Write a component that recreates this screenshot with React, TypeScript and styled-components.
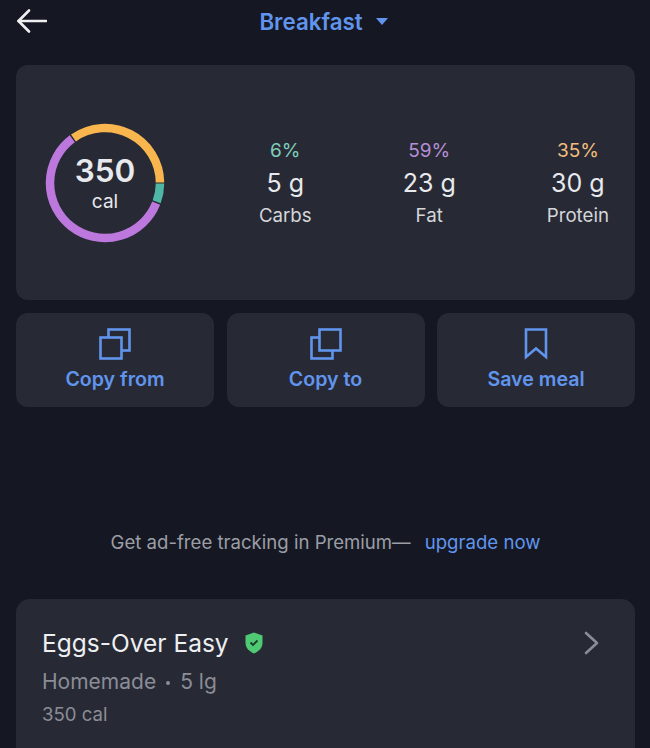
import { createGlobalStyle, styled } from 'styled-components'

const GlobalStyle = createGlobalStyle`
    html, body {
        margin: 0;
        padding: 0;
        height: 100%;
        background: #151823;
        overflow: hidden;
    }

    body {
        font-family: Inter, "Liberation Sans", sans-serif;
        -webkit-font-smoothing: antialiased;
    }
`

const Screen = styled.div`
    width: 650px;
    height: 748px;
    overflow: hidden;
    padding: 0 15px 0 16px;
    box-sizing: border-box;
    display: flex;
    flex-direction: column;
    background: #151823;
`

const Header = styled.header`
    height: 42px;
    margin-bottom: 23px;
    flex-shrink: 0;
    display: grid;
    grid-template-columns: 1fr auto 1fr;
    align-items: center;
`

const BackButton = styled.div`
    display: flex;
    align-items: center;
    padding-left: 1px;
`

const MealPicker = styled.div`
    display: flex;
    align-items: center;
    gap: 13px;
    margin-left: -4px;
    color: #6195ed;
    font-size: 22.3px;
    font-weight: 600;
`

const Caret = styled.span`
    width: 0;
    height: 0;
    border-left: 6.5px solid transparent;
    border-right: 6.5px solid transparent;
    border-top: 7px solid #6195ed;
`

const SummaryCard = styled.section`
    height: 235px;
    flex-shrink: 0;
    box-sizing: border-box;
    padding: 0 26px 0 29px;
    border-radius: 12px;
    background: #272a35;
    display: flex;
    align-items: center;
    justify-content: space-between;
`

const Ring = styled.div`
    position: relative;
    width: 120px;
    height: 120px;
`

const RingLabel = styled.div`
    position: absolute;
    inset: 0;
    display: flex;
    flex-direction: column;
    align-items: center;
    justify-content: center;
    color: #e8e9ec;
`

const Calories = styled.div`
    font-size: 31.5px;
    font-weight: 600;
    line-height: 38px;
`

const CaloriesUnit = styled.div`
    font-size: 19px;
    line-height: 24px;
`

const Macros = styled.div`
    display: flex;
    gap: 91px;
    padding-top: 2px;
`

const Macro = styled.div`
    display: flex;
    flex-direction: column;
    align-items: center;
`

const Percent = styled.div<{ $color: string }>`
    color: ${ props => props.$color };
    font-size: 19px;
    line-height: 22px;
`

const Grams = styled.div`
    color: #e8e9ec;
    font-size: 25px;
    line-height: 30px;
    margin-top: 6px;
`

const MacroName = styled.div`
    color: #d5d6da;
    font-size: 18.7px;
    line-height: 22px;
    margin-top: 7px;
`

const Actions = styled.div`
    display: grid;
    grid-template-columns: repeat(3, 198px);
    column-gap: 12.5px;
    margin-top: 13px;
    flex-shrink: 0;
`

const ActionButton = styled.div`
    height: 94px;
    box-sizing: border-box;
    padding-top: 15px;
    border-radius: 12px;
    background: #272a35;
    display: flex;
    flex-direction: column;
    align-items: center;
    gap: 8px;
    color: #6195ed;
    font-size: 19.6px;
    font-weight: 600;
    line-height: 22px;
`

const Promo = styled.div`
    margin-top: 123px;
    height: 24px;
    flex-shrink: 0;
    display: flex;
    justify-content: center;
    align-items: center;
    gap: 14px;
    font-size: 18.6px;
    color: #9c9ea6;
`

const UpgradeLink = styled.span`
    color: #6195ed;
`

const FoodCard = styled.section`
    margin-top: 45px;
    height: 170px;
    flex-shrink: 0;
    box-sizing: border-box;
    padding: 26px 36px 0 26px;
    border-radius: 14px;
    background: #272a35;
    display: flex;
    justify-content: space-between;
`

const FoodInfo = styled.div`
    display: flex;
    flex-direction: column;
`

const FoodTitle = styled.div`
    display: flex;
    align-items: center;
    gap: 16px;
    color: #eeeff1;
    font-size: 24.5px;
    line-height: 36px;
`

const FoodServing = styled.div`
    color: #8b8d96;
    font-size: 21px;
    line-height: 26px;
    margin-top: 8px;
`

const ServingDot = styled.span`
    display: inline-block;
    width: 4px;
    height: 4px;
    margin: 0 10px;
    border-radius: 50%;
    background: #8b8d96;
    vertical-align: middle;
`

const FoodCalories = styled.div`
    color: #8b8d96;
    font-size: 18.6px;
    line-height: 22px;
    margin-top: 8px;
`

const Chevron = styled.svg`
    margin-top: 6px;
`

const polar = (angle: number) => {
    const radians = (angle - 90) * Math.PI / 180
    return `${ 60 + 55 * Math.cos(radians) } ${ 60 + 55 * Math.sin(radians) }`
}

const arc = (start: number, end: number) =>
    `M ${ polar(start) } A 55 55 0 ${ end - start > 180 ? 1 : 0 } 1 ${ polar(end) }`

const segments = [
    { color: '#f9b64f', start: -35, end: 89.5 },
    { color: '#4fb7a6', start: 90.5, end: 110 },
    { color: '#bd78dd', start: 111.5, end: 323.5 },
]

const macros = [
    { name: 'Carbs', percent: '6%', grams: '5 g', color: '#7fcdbb' },
    { name: 'Fat', percent: '59%', grams: '23 g', color: '#b58fd6' },
    { name: 'Protein', percent: '35%', grams: '30 g', color: '#f2bd7c' },
]

const CopyFromIcon = () => (
    <svg width="32" height="32" viewBox="0 0 32 32" fill="none" stroke="#6195ed" strokeWidth="2.6">
        <rect x="9.5" y="1.5" width="21" height="21" />
        <rect x="1.5" y="9.5" width="21" height="21" fill="#272a35" />
    </svg>
)

const CopyToIcon = () => (
    <svg width="32" height="32" viewBox="0 0 32 32" fill="none" stroke="#6195ed" strokeWidth="2.6">
        <rect x="1.5" y="9.5" width="21" height="21" />
        <rect x="9.5" y="1.5" width="21" height="21" fill="#272a35" />
    </svg>
)

const BookmarkIcon = () => (
    <svg width="26" height="32" viewBox="0 0 26 32" fill="none" stroke="#6195ed" strokeWidth="2.6">
        <path d="M3 1.5 H23 V29 L13 20.5 L3 29 Z" />
    </svg>
)

const App = () => {

    return (
        <Screen>
            <GlobalStyle />

            <Header>
                <BackButton>
                    <svg width="30" height="24" viewBox="0 0 30 24" fill="none" stroke="#eeeff1" strokeWidth="2.6" strokeLinecap="round" strokeLinejoin="round">
                        <path d="M1.5 12 H29" />
                        <path d="M12 1.5 L1.5 12 L12 22.5" />
                    </svg>
                </BackButton>
                <MealPicker>
                    Breakfast
                    <Caret />
                </MealPicker>
            </Header>

            <SummaryCard>
                <Ring>
                    <svg width="120" height="120" viewBox="0 0 120 120" fill="none" strokeWidth="8.5">
                        { segments.map(segment => (
                            <path key={ segment.color } d={ arc(segment.start, segment.end) } stroke={ segment.color } />
                        )) }
                    </svg>
                    <RingLabel>
                        <Calories>350</Calories>
                        <CaloriesUnit>cal</CaloriesUnit>
                    </RingLabel>
                </Ring>

                <Macros>
                    { macros.map(macro => (
                        <Macro key={ macro.name }>
                            <Percent $color={ macro.color }>{ macro.percent }</Percent>
                            <Grams>{ macro.grams }</Grams>
                            <MacroName>{ macro.name }</MacroName>
                        </Macro>
                    )) }
                </Macros>
            </SummaryCard>

            <Actions>
                <ActionButton>
                    <CopyFromIcon />
                    Copy from
                </ActionButton>
                <ActionButton>
                    <CopyToIcon />
                    Copy to
                </ActionButton>
                <ActionButton>
                    <BookmarkIcon />
                    Save meal
                </ActionButton>
            </Actions>

            <Promo>
                <span>Get ad-free tracking in Premium—</span>
                <UpgradeLink>upgrade now</UpgradeLink>
            </Promo>

            <FoodCard>
                <FoodInfo>
                    <FoodTitle>
                        Eggs-Over Easy
                        <svg width="18" height="22" viewBox="0 0 18 22">
                            <path d="M9 0.5 L17.5 3.5 V11 C17.5 16 13.5 19.5 9 21.5 C4.5 19.5 0.5 16 0.5 11 V3.5 Z" fill="#4fc974" />
                            <path d="M5.5 10.5 L8 13 L12.5 8.5" fill="none" stroke="#1d3d2a" strokeWidth="1.8" />
                        </svg>
                    </FoodTitle>
                    <FoodServing>Homemade<ServingDot />5 lg</FoodServing>
                    <FoodCalories>350 cal</FoodCalories>
                </FoodInfo>
                <Chevron width="15" height="24" viewBox="0 0 15 24" fill="none" stroke="#8b8d96" strokeWidth="2.6" strokeLinecap="round" strokeLinejoin="round">
                    <path d="M2 2 L13 12 L2 22" />
                </Chevron>
            </FoodCard>
        </Screen>
    )
}

export default App
